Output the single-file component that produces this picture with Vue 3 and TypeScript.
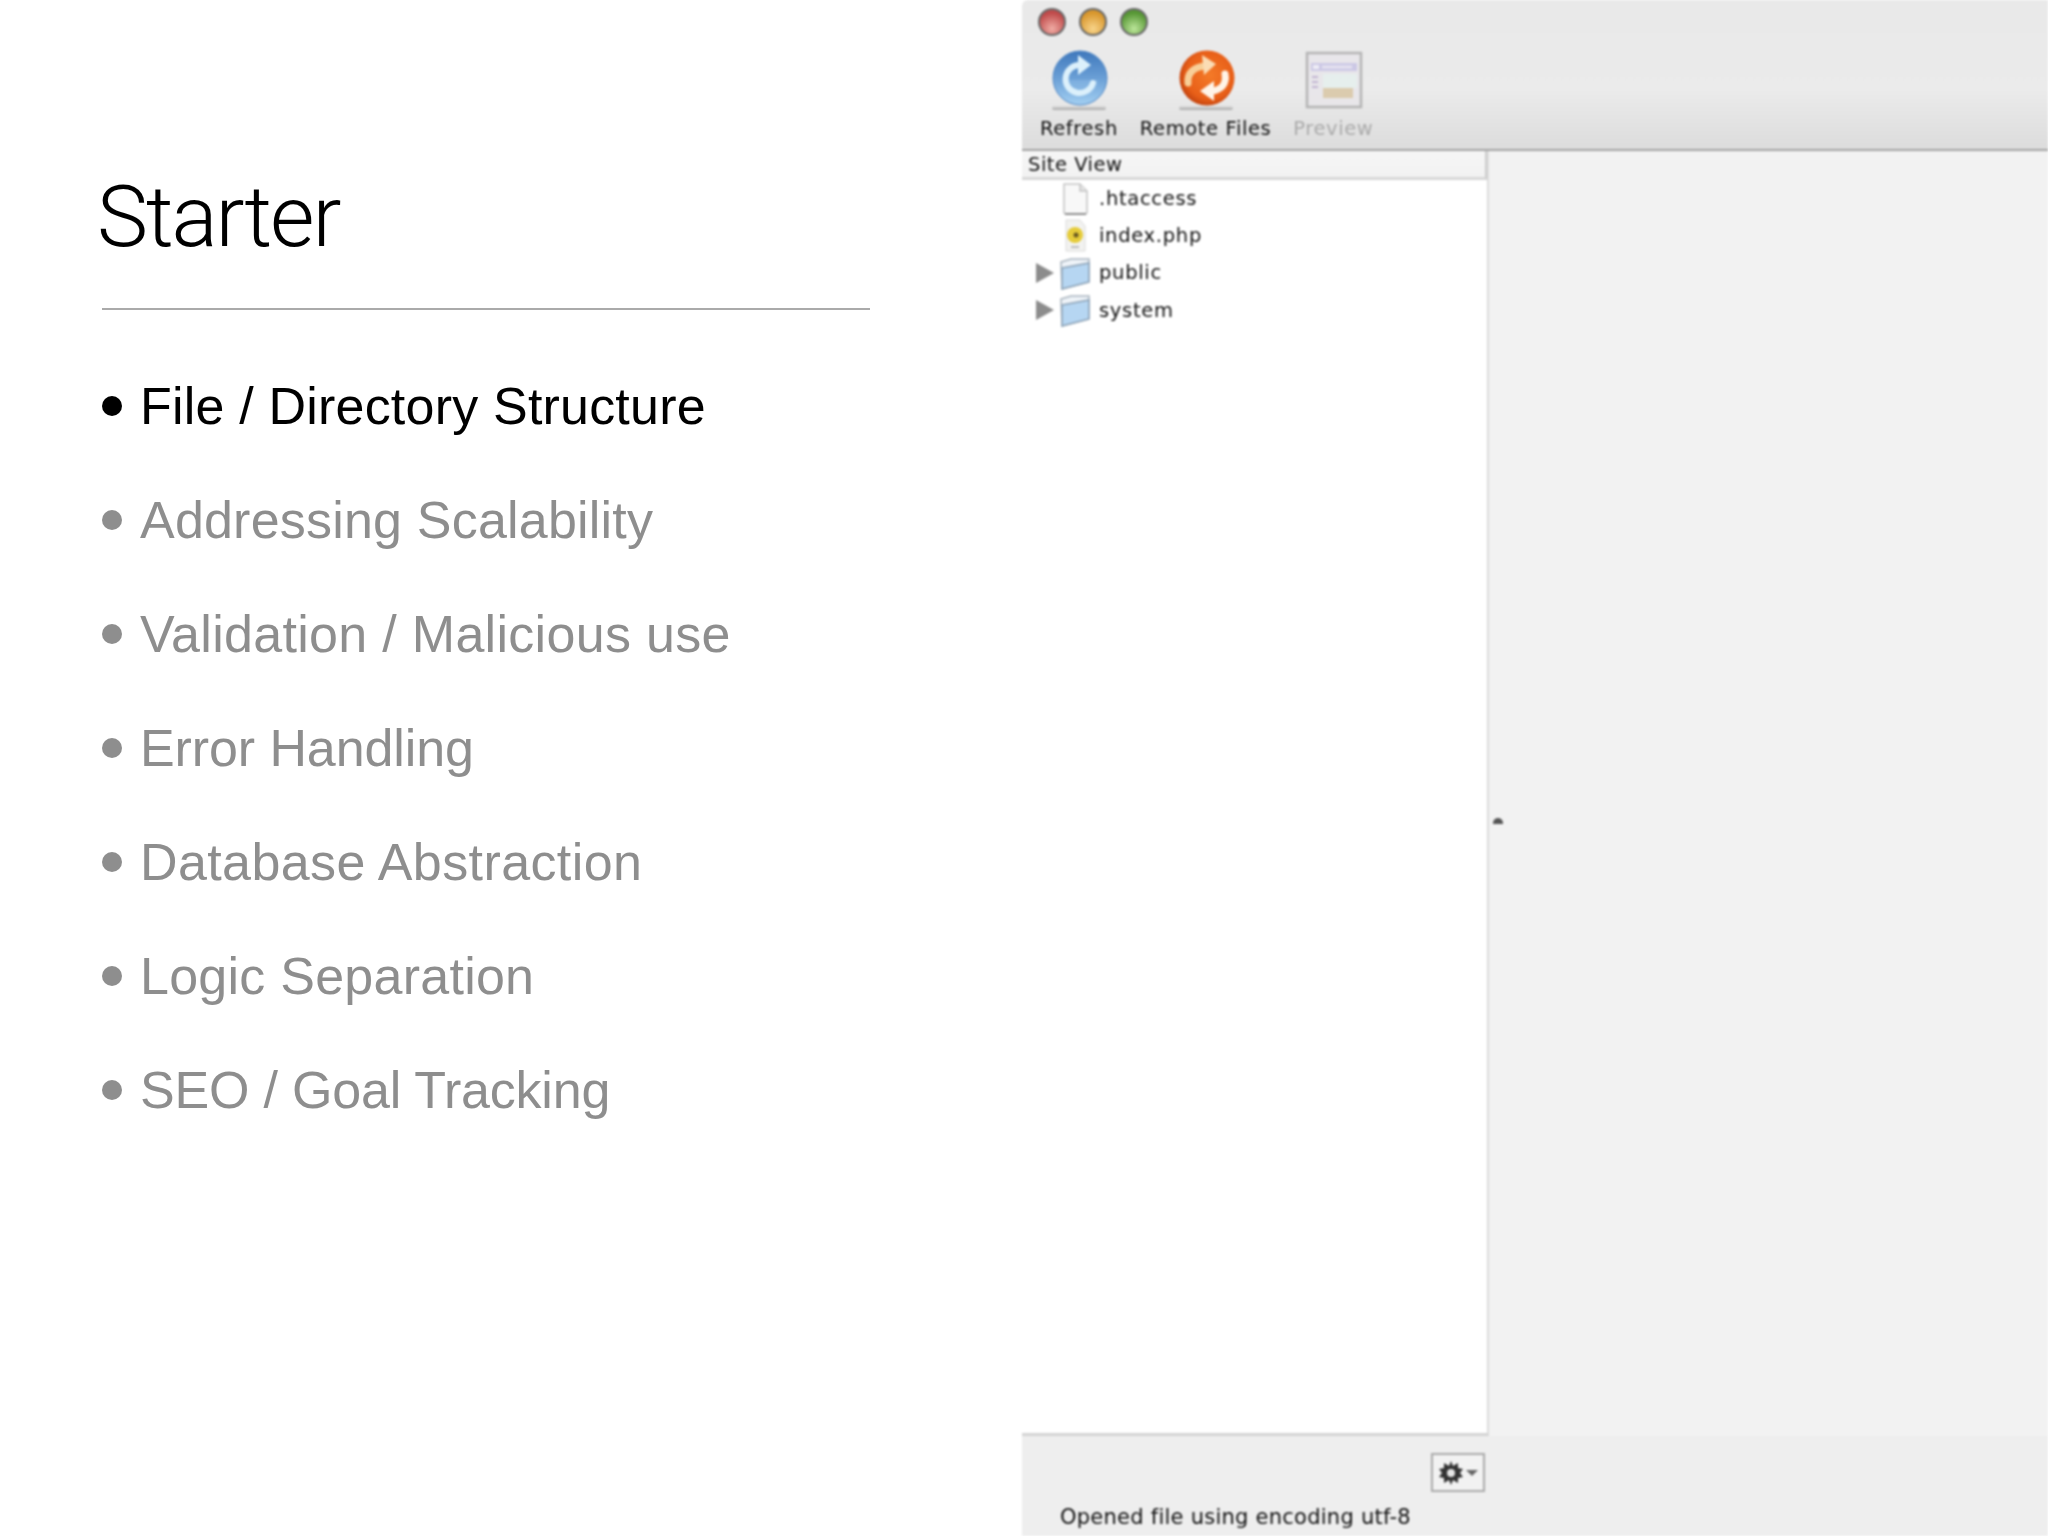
<script setup lang="ts">
const topics: { label: string; active?: boolean; track: number }[] = [
  { label: 'File / Directory Structure', active: true, track: 0.2 },
  { label: 'Addressing Scalability', track: 0.2 },
  { label: 'Validation / Malicious use', track: 0.3 },
  { label: 'Error Handling', track: -0.1 },
  { label: 'Database Abstraction', track: 0.4 },
  { label: 'Logic Separation', track: 0.25 },
  { label: 'SEO / Goal Tracking', track: -0.2 },
]
const files = [
  { name: '.htaccess', kind: 'doc' },
  { name: 'index.php', kind: 'php' },
  { name: 'public', kind: 'folder' },
  { name: 'system', kind: 'folder' },
]
</script>

<template>
  <div class="page">
    <section class="slide">
      <h1 class="title">Starter</h1>
      <div class="rule"></div>
      <ul class="topics">
        <li v-for="t in topics" :key="t.label" class="topic" :class="{ active: t.active }">
          <span class="dot"></span><span :style="{ letterSpacing: t.track + 'px' }">{{ t.label }}</span>
        </li>
      </ul>
    </section>

    <section class="window">
      <header class="toolbar">
        <div class="lights">
          <span class="light red"></span>
          <span class="light yellow"></span>
          <span class="light green"></span>
        </div>
        <div class="tools">
          <div class="tool refresh">
            <svg width="64" height="62" viewBox="0 0 64 62">
              <defs>
                <linearGradient id="blue" x1="0" y1="0" x2="0" y2="1">
                  <stop offset="0" stop-color="#3f78bc" />
                  <stop offset=".5" stop-color="#6a9fd6" />
                  <stop offset="1" stop-color="#a4d0f2" />
                </linearGradient>
                <linearGradient id="shade" x1="0" y1="0" x2="0" y2="1">
                  <stop offset="0" stop-color="#999" stop-opacity=".1" />
                  <stop offset="1" stop-color="#888" stop-opacity=".7" />
                </linearGradient>
              </defs>
              <rect x="5" y="56" width="54" height="4" rx="2" fill="url(#shade)" />
              <circle cx="33" cy="28" r="27" fill="url(#blue)" stroke="#4f86c4" stroke-width="1" />
              <path d="M15 30 H51 A18 18 0 0 1 15 30 Z" fill="#8dbce6" opacity=".45" />
              <path d="M33 15 A14 14 0 1 0 46 33" fill="none" stroke="#dcf0fb" stroke-width="6" stroke-linecap="round" />
              <path d="M31 5 L44 15 L31 25 Z" fill="#dcf0fb" />
            </svg>
            <span class="label">Refresh</span>
          </div>
          <div class="tool remote">
            <svg width="64" height="62" viewBox="0 0 64 62">
              <defs>
                <radialGradient id="orange" cx="55%" cy="45%" r="58%">
                  <stop offset="0" stop-color="#f47a28" />
                  <stop offset=".75" stop-color="#e85f18" />
                  <stop offset="1" stop-color="#c0410e" />
                </radialGradient>
              </defs>
              <rect x="5" y="56" width="54" height="4" rx="2" fill="url(#shade)" />
              <circle cx="33" cy="28" r="27.5" fill="url(#orange)" />
              <path d="M14 33 C13 23 20 17 31 16" fill="none" stroke="#f8cf98" stroke-width="7" stroke-linecap="round" />
              <path d="M28 5 L42 14 L30 25 Z" fill="#fbdcb4" />
              <path d="M51 24 C53 34 47 40 38 41" fill="none" stroke="#fff4e8" stroke-width="7" stroke-linecap="round" />
              <path d="M40 31 L26 41 L40 51 Z" fill="#fff4e8" />
            </svg>
            <span class="label">Remote Files</span>
          </div>
          <div class="tool preview">
            <svg class="faded" width="64" height="62" viewBox="0 0 64 62">
              <rect x="6" y="3" width="54" height="54" fill="#e8e6ea" stroke="#a8a8a8" stroke-width="2.5" />
              <rect x="10" y="13" width="46" height="8" fill="#c5c0e4" />
              <rect x="12" y="15" width="6" height="4" fill="#f0eef8" />
              <rect x="21" y="15.5" width="30" height="3" fill="#e4e1f2" />
              <rect x="11" y="26" width="6" height="2" fill="#b9a8cc" />
              <rect x="11" y="31" width="6" height="2" fill="#b9a8cc" />
              <rect x="11" y="36" width="6" height="2" fill="#b9a8cc" />
              <rect x="22" y="24" width="34" height="14" fill="#e6f0ee" />
              <rect x="22" y="38" width="30" height="10" fill="#d8c4a0" />
            </svg>
            <span class="label">Preview</span>
          </div>
        </div>
      </header>

      <div class="body">
        <aside class="sidebar">
          <div class="site-head">Site View</div>
          <ul class="tree">
            <li v-for="f in files" :key="f.name" class="row">
              <svg v-if="f.kind === 'folder'" class="arrow" width="18" height="20" viewBox="0 0 18 20"><path d="M0 0 L18 10 L0 20 Z" fill="#8c8c8c" /></svg>
              <span v-else class="arrow-gap"></span>
              <svg v-if="f.kind === 'doc'" class="icon" width="32" height="34" viewBox="0 0 32 34">
                <path d="M5 2 H21 L28 9 V30 Q28 32 26 32 H7 Q5 32 5 30 Z" fill="#f8f8f8" stroke="#c4c4c4" stroke-width="1.5" />
                <path d="M21 2 V9 H28" fill="#e4e4e4" stroke="#c4c4c4" stroke-width="1.5" />
                <path d="M6 32 H27" stroke="#8e8e8e" stroke-width="2" />
              </svg>
              <svg v-else-if="f.kind === 'php'" class="icon" width="32" height="34" viewBox="0 0 32 34">
                <path d="M7 1 H21 L26 7 V32 H7 Z" fill="#f2f2f0" stroke="#dcdcdc" />
                <circle cx="16" cy="16" r="8" fill="#e6cc3a" />
                <circle cx="17" cy="16" r="2.5" fill="#6a5a20" />
                <rect x="12" y="27" width="8" height="2" fill="#bbb" />
              </svg>
              <svg v-else class="icon" width="32" height="34" viewBox="0 0 32 34">
                <path d="M2 6 L12 3 H30 V26 L3 33 Z" fill="#eef3f8" stroke="#a9b4be" stroke-width="1.5" />
                <path d="M3 12 L30 7 V26 L3 33 Z" fill="#b6d6f2" stroke="#8ea4b8" stroke-width="1.5" />
              </svg>
              <span class="name">{{ f.name }}</span>
            </li>
          </ul>
        </aside>
        <main class="pane"><span class="grip"></span></main>
      </div>

      <footer class="status">
        <div class="status-top">
          <button class="gear" type="button">
            <svg width="26" height="26" viewBox="0 0 26 26">
              <path d="M13 1 L15 6 L20 3 L20 8 L25 9 L22 13 L25 17 L20 18 L20 23 L15 20 L13 25 L11 20 L6 23 L6 18 L1 17 L4 13 L1 9 L6 8 L6 3 L11 6 Z" fill="#333" />
              <circle cx="13" cy="13" r="4" fill="#e6e6e6" />
            </svg>
            <svg width="12" height="8" viewBox="0 0 12 8"><path d="M0 1 H12 L6 7 Z" fill="#666" /></svg>
          </button>
        </div>
        <div class="status-text">Opened file using encoding utf-8</div>
      </footer>
    </section>
  </div>
</template>

<style scoped>
.page {
  width: 2048px;
  height: 1536px;
  display: flex;
  background: #fff;
  overflow: hidden;
}
.slide {
  width: 1022px;
  flex: none;
  box-sizing: border-box;
  padding: 165px 0 0 102px;
  font-family: "Liberation Sans", Arial, sans-serif;
}
.title {
  margin: 0 0 0 -5px;
  font-family: Roboto, "Liberation Sans", sans-serif;
  font-weight: 300;
  font-size: 86px;
  line-height: 104px;
  letter-spacing: -2.1px;
  color: #000;
}
.rule {
  width: 768px;
  height: 2px;
  margin-top: 39px;
  background: #aaa;
}
.topics {
  list-style: none;
  margin: 39px 0 0;
  padding: 0;
}
.topic {
  height: 114px;
  display: flex;
  align-items: center;
  gap: 18px;
  font-size: 52px;
  color: #8e8e8e;
}
.topic.active { color: #000; }
.dot {
  width: 20px;
  height: 20px;
  border-radius: 50%;
  background: currentColor;
  flex: none;
}
.window {
  flex: 1;
  display: flex;
  flex-direction: column;
  font-family: "DejaVu Sans", Verdana, sans-serif;
  color: #111;
  filter: blur(0.8px);
}
.toolbar {
  height: 151px;
  flex: none;
  box-sizing: border-box;
  background: linear-gradient(#e9e9e9, #ebebeb 60%, #dcdcdc);
  border-bottom: 2px solid #a4a4a4;
  border-top-left-radius: 6px;
}
.lights {
  display: flex;
  gap: 13px;
  padding: 8px 0 0 16px;
}
.light {
  width: 28px;
  height: 28px;
  border-radius: 50%;
  box-sizing: border-box;
  border: 2px solid #6a6a6a;
}
.red { background: radial-gradient(circle at 50% 78%, #f0aca4, #bf4a4a 72%); }
.yellow { background: radial-gradient(circle at 50% 78%, #f8d48a, #d8962c 72%); }
.green { background: radial-gradient(circle at 50% 78%, #bce69a, #569634 72%); }
.tools {
  display: flex;
  margin-top: 14px;
  padding-left: 18px;
  gap: 22px;
}
.tool {
  display: flex;
  flex-direction: column;
  align-items: center;
}
.faded { opacity: .8; }
.label {
  margin-top: 4px;
  font-size: 19.5px;
  letter-spacing: .6px;
  line-height: 26px;
  white-space: nowrap;
}
.preview .label { color: #aaa; }
.body {
  flex: 1;
  display: flex;
  min-height: 0;
}
.sidebar {
  width: 467px;
  box-sizing: border-box;
  flex: none;
  background: #fff;
  border-right: 2px solid #dcdcdc;
  border-bottom: 3px solid #d4d4d4;
}
.site-head {
  height: 29px;
  box-sizing: border-box;
  padding-left: 6px;
  background: linear-gradient(#f6f6f6, #f2f2f2);
  border-bottom: 3px solid #d8d8d8;
  border-right: 2px solid #ccc;
  font-size: 19.5px;
  letter-spacing: .5px;
  line-height: 27px;
}
.tree {
  list-style: none;
  margin: 0;
  padding: 0;
}
.row {
  height: 37.2px;
  display: flex;
  align-items: center;
  font-size: 19.5px;
  letter-spacing: .7px;
}
.arrow { margin-left: 14px; flex: none; }
.arrow-gap { width: 32px; flex: none; }
.icon { margin-left: 5px; flex: none; }
.name { margin-left: 8px; }
.pane {
  flex: 1;
  background: #f2f2f2;
  display: flex;
  align-items: center;
}
.grip {
  width: 10px;
  height: 6px;
  margin: 54px 0 0 4px;
  background: #555;
  border-radius: 5px 5px 0 0;
}
.status {
  height: 100px;
  flex: none;
  box-sizing: border-box;
  background: #eee;
  padding-top: 17px;
}
.status-top {
  display: flex;
  justify-content: flex-end;
  padding-right: 563px;
}
.gear {
  width: 54px;
  height: 39px;
  box-sizing: border-box;
  padding: 0;
  display: flex;
  align-items: center;
  justify-content: center;
  gap: 2px;
  background: #f2f2f2;
  border: 2px solid #aaa;
}
.status-text {
  margin: 12px 0 0 38px;
  font-size: 21px;
  letter-spacing: .25px;
  line-height: 26px;
}
</style>
